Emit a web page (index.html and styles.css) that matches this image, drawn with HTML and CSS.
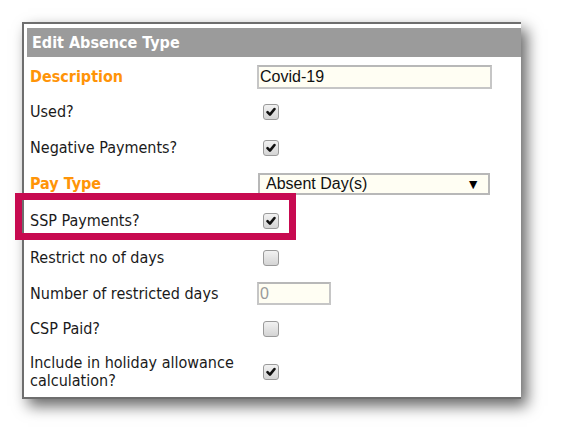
FILE: index.html
```html
<!DOCTYPE html>
<html>
<head>
<meta charset="utf-8">
<link rel="stylesheet" href="styles.css">
</head>
<body>
<div class="panel">
  <div class="header">Edit Absence Type</div>
  <div class="rows">
    <div class="row r35">
      <div class="label key">Description</div>
      <div class="ctl"><div class="text-input wide">Covid-19</div></div>
    </div>
    <div class="row r35">
      <div class="label">Used?</div>
      <div class="ctl"><span class="cb on"><svg viewBox="0 0 16 16"><path d="M4 8.2 L6.8 11 L12 4.6" /></svg></span></div>
    </div>
    <div class="row r37">
      <div class="label">Negative Payments?</div>
      <div class="ctl"><span class="cb on"><svg viewBox="0 0 16 16"><path d="M4 8.2 L6.8 11 L12 4.6" /></svg></span></div>
    </div>
    <div class="row r36">
      <div class="label key">Pay Type</div>
      <div class="ctl"><div class="select"><span>Absent Day(s)</span><span class="arrow">▼</span></div></div>
    </div>
    <div class="row r37 hl-row">
      <div class="label">SSP Payments?</div>
      <div class="ctl"><span class="cb on"><svg viewBox="0 0 16 16"><path d="M4 8.2 L6.8 11 L12 4.6" /></svg></span></div>
      <div class="highlight"></div>
    </div>
    <div class="row r37">
      <div class="label">Restrict no of days</div>
      <div class="ctl"><span class="cb"></span></div>
    </div>
    <div class="row r35">
      <div class="label">Number of restricted days</div>
      <div class="ctl"><div class="text-input small">0</div></div>
    </div>
    <div class="row r35">
      <div class="label">CSP Paid?</div>
      <div class="ctl"><span class="cb"></span></div>
    </div>
    <div class="row last">
      <div class="label">Include in holiday allowance<br>calculation?</div>
      <div class="ctl"><span class="cb on"><svg viewBox="0 0 16 16"><path d="M4 8.2 L6.8 11 L12 4.6" /></svg></span></div>
    </div>
  </div>
</div>
</body>
</html>
```
FILE: styles.css
```css
html, body {
  margin: 0;
  padding: 0;
  background: #ffffff;
}
body {
  width: 563px;
  height: 436px;
  overflow: hidden;
  padding-top: 22px;
  padding-left: 22px;
  box-sizing: border-box;
}
.panel {
  width: 499px;
  height: 377px;
  box-sizing: border-box;
  border-top: 2px solid #6e6e6e;
  border-left: 2px solid #6e6e6e;
  border-bottom: 2px solid #6e6e6e;
  padding: 4px 0 0 3px;
  background: #fff;
  box-shadow: 6px 7px 14px rgba(0, 0, 0, 0.6);
  font-family: "DejaVu Sans Condensed", "DejaVu Sans", sans-serif;
  font-size: 16px;
  color: #1a1a1a;
}
.header {
  height: 29px;
  background: #9b9b9b;
  color: #ffffff;
  font-weight: bold;
  font-size: 16px;
  line-height: 29px;
  padding-left: 5px;
}
.rows {
  display: flex;
  flex-direction: column;
  padding-top: 2px;
}
.row {
  display: flex;
  align-items: center;
  padding-left: 3px;
}
.r35 { height: 35px; }
.r36 { height: 36px; }
.r37 { height: 37px; }
.last { height: 51px; }
.hl-row { position: relative; }
.label {
  width: 227px;
  line-height: 18px;
}
.key {
  color: #ff9408;
  font-weight: bold;
}
.ctl {
  display: flex;
  align-items: center;
}
.text-input {
  box-sizing: border-box;
  border: 2px solid #c6c6c6;
  border-top-color: #b8b8b8;
  background: #fffef3;
  font-family: "Liberation Sans", Arial, sans-serif;
  color: #111;
  font-size: 16px;
  padding-left: 1px;
}
.wide {
  width: 235px;
  height: 24px;
  line-height: 20px;
}
.small {
  width: 74px;
  height: 23px;
  line-height: 19px;
  color: #9a9a9a;
}
.select {
  box-sizing: border-box;
  width: 232px;
  height: 22px;
  border: 2px solid #b8b8b8;
  background: #fffef3;
  font-family: "Liberation Sans", Arial, sans-serif;
  font-size: 16px;
  color: #111;
  display: flex;
  align-items: center;
  justify-content: space-between;
  padding: 0 8px 0 6px;
  margin-left: 1px;
}
.arrow {
  font-size: 14px;
  color: #000;
}
.cb {
  box-sizing: border-box;
  width: 16px;
  height: 16px;
  margin-left: 6px;
  border: 1px solid #9a9a9a;
  border-radius: 3px;
  background: linear-gradient(#f2f2f2, #d4d4d4);
  display: flex;
}
.cb svg {
  width: 14px;
  height: 14px;
}
.cb path {
  fill: none;
  stroke: #111;
  stroke-width: 3;
  stroke-linecap: round;
  stroke-linejoin: round;
}
.highlight {
  position: absolute;
  left: -12px;
  top: -9px;
  width: 281px;
  height: 47px;
  box-sizing: border-box;
  border: 7px solid #c70a50;
}
```
